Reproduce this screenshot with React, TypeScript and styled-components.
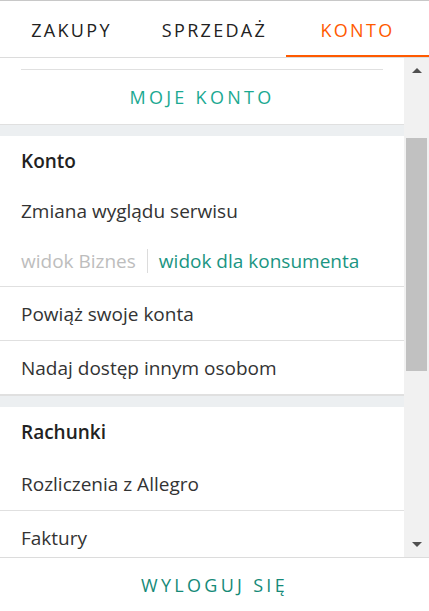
import React from "react";
import styled, { createGlobalStyle } from "styled-components";

const GlobalStyle = createGlobalStyle`
  html, body {
    margin: 0;
    padding: 0;
    background: #fff;
  }
  body {
    font-family: "Open Sans", "Liberation Sans", sans-serif;
    color: #222;
  }
`;

const Page = styled.div`
  width: 429px;
  height: 611px;
  display: flex;
  flex-direction: column;
  border-top: 1px solid #c8c8c8;
  box-sizing: border-box;
  overflow: hidden;
`;

const Tabs = styled.nav`
  display: grid;
  grid-template-columns: repeat(3, 1fr);
  height: 57px;
  box-sizing: border-box;
  border-bottom: 1px solid #dcdcdc;
  flex-shrink: 0;
`;

const Tab = styled.div<{ $active?: boolean }>`
  display: flex;
  align-items: center;
  justify-content: center;
  font-size: 18px;
  letter-spacing: 2.3px;
  color: ${(p) => (p.$active ? "#ff5a00" : "#222")};
  border-bottom: 2px solid ${(p) => (p.$active ? "#ff5a00" : "transparent")};
  padding-top: 3px;
  box-sizing: border-box;
`;

const Body = styled.div`
  flex: 1;
  display: flex;
  min-height: 0;
`;

const Content = styled.div`
  flex: 1;
  overflow: hidden;
`;

const Heading = styled.div`
  margin: 11px 21px 0;
  border-top: 1px solid #e0e0e0;
  height: 54px;
  display: flex;
  align-items: center;
  justify-content: center;
  font-size: 18px;
  letter-spacing: 3.3px;
  color: #1ba992;
`;

const Section = styled.section`
  border-top: 1px solid #e0e0e0;
  padding-top: 11px;
  background: #eceff1;
`;

const SectionInner = styled.div`
  background: #fff;
`;

const Item = styled.div<{ $bold?: boolean; $h?: number; $border?: boolean }>`
  height: ${(p) => p.$h ?? 53}px;
  display: flex;
  align-items: center;
  padding: 0 21px;
  font-size: 19px;
  font-weight: ${(p) => (p.$bold ? 600 : 400)};
  color: ${(p) => (p.$bold ? "#222" : "#333")};
  border-bottom: ${(p) => (p.$border ? "1px solid #e0e0e0" : "none")};
`;

const ViewSwitch = styled.div`
  height: 50px;
  display: flex;
  align-items: center;
  padding: 0 21px;
  font-size: 19px;
  border-bottom: 1px solid #e0e0e0;
`;

const ViewOption = styled.span<{ $active?: boolean }>`
  color: ${(p) => (p.$active ? "#1a9582" : "#bdbdbd")};
  & + & {
    margin-left: 11px;
    padding-left: 11px;
    border-left: 1px solid #dcdcdc;
    line-height: 24px;
  }
`;

const Scrollbar = styled.div`
  width: 25px;
  background: #f1f1f1;
  display: flex;
  flex-direction: column;
  align-items: center;
`;

const Arrow = styled.div<{ $down?: boolean }>`
  height: 25px;
  width: 100%;
  display: flex;
  align-items: center;
  justify-content: center;
  &::before {
    content: "";
    width: 0;
    height: 0;
    border-left: 5px solid transparent;
    border-right: 5px solid transparent;
    ${(p) =>
      p.$down
        ? "border-top: 5px solid #505050;"
        : "border-bottom: 5px solid #505050;"}
  }
`;

const Track = styled.div`
  flex: 1;
  width: 100%;
  display: flex;
  flex-direction: column;
  align-items: center;
`;

const Thumb = styled.div`
  width: 21px;
  height: 233px;
  margin-top: 55px;
  background: #c1c1c1;
`;

const Footer = styled.div`
  height: 54px;
  box-sizing: border-box;
  flex-shrink: 0;
  border-top: 1px solid #dcdcdc;
  display: flex;
  align-items: center;
  justify-content: center;
  font-size: 18px;
  letter-spacing: 3.3px;
  color: #158a78;
`;

export default function App() {
  return (
    <>
      <GlobalStyle />
      <Page>
        <Tabs>
          <Tab>ZAKUPY</Tab>
          <Tab>SPRZEDAŻ</Tab>
          <Tab $active>KONTO</Tab>
        </Tabs>
        <Body>
          <Content>
            <Heading>MOJE KONTO</Heading>
            <Section>
              <SectionInner>
                <Item $bold $h={50}>Konto</Item>
                <Item $h={50}>Zmiana wyglądu serwisu</Item>
                <ViewSwitch>
                  <ViewOption>widok Biznes</ViewOption>
                  <ViewOption $active>widok dla konsumenta</ViewOption>
                </ViewSwitch>
                <Item $border>Powiąż swoje konta</Item>
                <Item $border>Nadaj dostęp innym osobom</Item>
              </SectionInner>
            </Section>
            <Section>
              <SectionInner>
                <Item $bold $h={50}>Rachunki</Item>
                <Item $border>Rozliczenia z Allegro</Item>
                <Item $border>Faktury</Item>
              </SectionInner>
            </Section>
          </Content>
          <Scrollbar>
            <Arrow />
            <Track>
              <Thumb />
            </Track>
            <Arrow $down />
          </Scrollbar>
        </Body>
        <Footer>WYLOGUJ SIĘ</Footer>
      </Page>
    </>
  );
}
